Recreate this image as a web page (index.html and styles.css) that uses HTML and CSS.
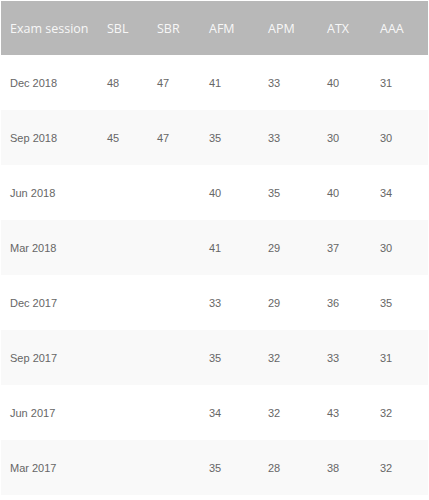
FILE: index.html
```html
<!DOCTYPE html>
<html>
<head>
<meta charset="utf-8">
<link rel="stylesheet" href="styles.css">
</head>
<body>
<table class="results">
  <colgroup>
    <col class="c-session">
    <col class="c-sbl">
    <col class="c-sbr">
    <col class="c-afm">
    <col class="c-apm">
    <col class="c-atx">
    <col class="c-aaa">
  </colgroup>
  <thead>
    <tr><th>Exam session</th><th>SBL</th><th>SBR</th><th>AFM</th><th>APM</th><th>ATX</th><th>AAA</th></tr>
  </thead>
  <tbody>
    <tr><td>Dec 2018</td><td>48</td><td>47</td><td>41</td><td>33</td><td>40</td><td>31</td></tr>
    <tr><td>Sep 2018</td><td>45</td><td>47</td><td>35</td><td>33</td><td>30</td><td>30</td></tr>
    <tr><td>Jun 2018</td><td></td><td></td><td>40</td><td>35</td><td>40</td><td>34</td></tr>
    <tr><td>Mar 2018</td><td></td><td></td><td>41</td><td>29</td><td>37</td><td>30</td></tr>
    <tr><td>Dec 2017</td><td></td><td></td><td>33</td><td>29</td><td>36</td><td>35</td></tr>
    <tr><td>Sep 2017</td><td></td><td></td><td>35</td><td>32</td><td>33</td><td>31</td></tr>
    <tr><td>Jun 2017</td><td></td><td></td><td>34</td><td>32</td><td>43</td><td>32</td></tr>
    <tr><td>Mar 2017</td><td></td><td></td><td>35</td><td>28</td><td>38</td><td>32</td></tr>
  </tbody>
</table>
</body>
</html>
```
FILE: styles.css
```css
html, body {
  margin: 0;
  padding: 0;
  background: #ffffff;
}
body {
  padding: 1px 1px 0 1px;
}
.results {
  border-collapse: collapse;
  table-layout: fixed;
  width: 427px;
  font-family: "Liberation Sans", Arial, sans-serif;
}
.c-session { width: 97px; }
.c-sbl { width: 50px; }
.c-sbr { width: 52px; }
.c-afm { width: 59px; }
.c-apm { width: 59px; }
.c-atx { width: 53px; }
.c-aaa { width: 57px; }
.results th {
  background: #b8b8b8;
  color: #f7f7f7;
  font-family: "Open Sans", sans-serif;
  font-weight: normal;
  font-size: 12.5px;
  text-align: left;
  height: 54px;
  padding: 0 0 0 9px;
  box-sizing: border-box;
}
.results td {
  color: #666666;
  font-size: 11px;
  height: 55px;
  padding: 0 0 0 9px;
  box-sizing: border-box;
  vertical-align: middle;
}
.results tbody tr:nth-child(even) td {
  background: #f9f9f9;
}
```
